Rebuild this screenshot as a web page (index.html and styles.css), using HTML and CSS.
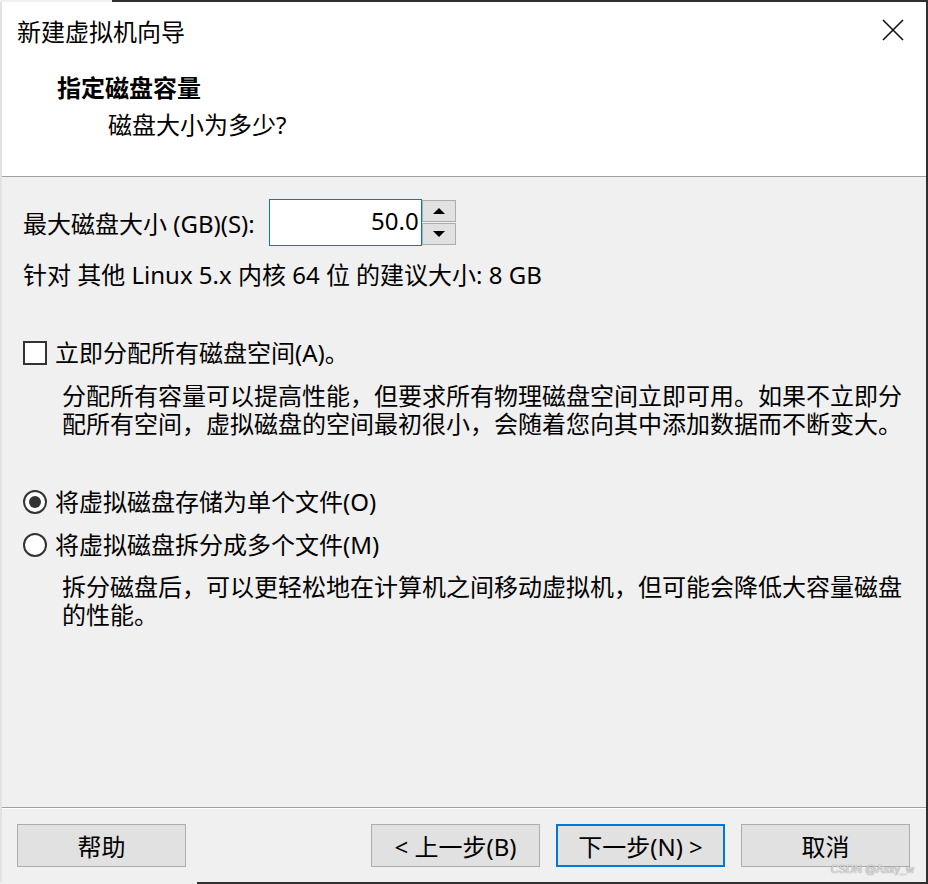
FILE: index.html
```html
<!DOCTYPE html>
<html>
  <head>
    <meta charset="UTF-8">
    <title>新建虚拟机向导</title>
    <link rel="stylesheet" href="styles.css">
  </head>
  <body>
    <div class="wizard">
      <div class="header">
        <div class="titlebar">
          <span class="title">新建虚拟机向导</span>
          <span class="close">
            <svg width="22" height="22" viewBox="0 0 22 22"><path d="M1 1 L21 21 M21 1 L1 21" stroke="#111" stroke-width="1.6" fill="none"/></svg>
          </span>
        </div>
        <div class="heading">指定磁盘容量</div>
        <div class="subheading">磁盘大小为多少?</div>
      </div>

      <div class="content">
        <div class="size-row">
          <label>最大磁盘大小 (GB)(S):</label>
          <div class="spin">
            <div class="spin-value">50.0</div>
            <div class="spin-buttons">
              <div class="spin-btn"><span class="arrow up"></span></div>
              <div class="spin-btn"><span class="arrow down"></span></div>
            </div>
          </div>
        </div>
        <div class="hint">针对 其他 Linux 5.x 内核 64 位 的建议大小: 8 GB</div>

        <div class="option first">
          <span class="checkbox"></span>
          <span>立即分配所有磁盘空间(A)。</span>
        </div>
        <div class="desc">分配所有容量可以提高性能，但要求所有物理磁盘空间立即可用。如果不立即分配所有空间，虚拟磁盘的空间最初很小，会随着您向其中添加数据而不断变大。</div>

        <div class="option radio-first">
          <span class="radio checked"></span>
          <span>将虚拟磁盘存储为单个文件(O)</span>
        </div>
        <div class="option radio-second">
          <span class="radio"></span>
          <span>将虚拟磁盘拆分成多个文件(M)</span>
        </div>
        <div class="desc desc2">拆分磁盘后，可以更轻松地在计算机之间移动虚拟机，但可能会降低大容量磁盘的性能。</div>
      </div>

      <div class="footer">
        <button class="btn">帮助</button>
        <div class="spacer"></div>
        <button class="btn">&lt; 上一步(B)</button>
        <button class="btn default">下一步(N) &gt;</button>
        <button class="btn">取消</button>
        <span class="watermark">CSDN @Asxy_w</span>
      </div>
    </div>
  </body>
</html>
```

FILE: styles.css
```css
html, body {
  margin: 0;
  padding: 0;
}

body {
  width: 928px;
  height: 884px;
  overflow: hidden;
  background:
    linear-gradient(#f0f0f0, #f0f0f0) 0 0 / 112px 2px no-repeat,
    linear-gradient(#f0f0f0, #f0f0f0) 0 100% / 197px 2px no-repeat,
    #2f2f2f;
  font-family: "Noto Sans", "Noto Sans CJK SC", sans-serif;
  font-size: 24px;
  color: #000;
}

.wizard {
  position: relative;
  margin-top: 2px;
  width: 926px;
  height: 880px;
  background-color: #f0f0f0;
  border-left: 2px solid #e2e2e2;
  box-sizing: border-box;
  display: flex;
  flex-direction: column;
}

.header {
  height: 175px;
  background-color: #fff;
  border-bottom: 1px solid #a0a0a0;
  box-sizing: border-box;
}

.titlebar {
  height: 56px;
  display: flex;
  align-items: center;
  justify-content: space-between;
  padding: 0 22px 0 15px;
}

.close {
  display: flex;
  width: 22px;
  height: 22px;
}

.heading {
  margin: 15px 0 0 55px;
  line-height: 30px;
  font-weight: bold;
}

.subheading {
  margin: 7px 0 0 106px;
  line-height: 30px;
}

.content {
  flex: 1;
  padding: 22px 0 0 21px;
}

.size-row {
  display: flex;
  align-items: center;
  height: 47px;
}

.size-row label {
  margin-right: 14px;
}

.spin {
  display: flex;
  height: 47px;
}

.spin-value {
  width: 153px;
  border: 1px solid #0078d7;
  background-color: #fff;
  box-sizing: border-box;
  text-align: right;
  padding-right: 2px;
  line-height: 42px;
}

.spin-buttons {
  display: flex;
  flex-direction: column;
  gap: 1px;
  padding: 1px 0;
  background-color: #f0f0f0;
}

.spin-btn {
  width: 34px;
  flex: 1;
  border: 1px solid #adadad;
  background-color: #e1e1e1;
  box-sizing: border-box;
  display: flex;
  align-items: center;
  justify-content: center;
}

.arrow {
  width: 0;
  height: 0;
  border-left: 6px solid transparent;
  border-right: 6px solid transparent;
}

.arrow.up {
  border-bottom: 6px solid #000;
}

.arrow.down {
  border-top: 6px solid #000;
}

.hint {
  margin-top: 14px;
  line-height: 30px;
}

.option {
  display: flex;
  align-items: center;
  gap: 8px;
  line-height: 30px;
}

.option.first {
  margin-top: 48px;
}

.option.radio-first {
  margin-top: 49px;
}

.option.radio-second {
  margin-top: 13px;
}

.checkbox {
  width: 24px;
  height: 24px;
  border: 2px solid #333;
  background-color: #fff;
  box-sizing: border-box;
}

.radio {
  width: 24px;
  height: 24px;
  border: 2px solid #333;
  border-radius: 50%;
  background-color: #fff;
  box-sizing: border-box;
  display: flex;
  align-items: center;
  justify-content: center;
}

.radio.checked::after {
  content: "";
  width: 12px;
  height: 12px;
  border-radius: 50%;
  background-color: #333;
}

.desc {
  margin: 14px 20px 0 39px;
  line-height: 28px;
}

.desc2 {
  margin-top: 13px;
}

.footer {
  position: relative;
  height: 75px;
  border-top: 1px solid #a0a0a0;
  box-shadow: inset 0 1px 0 #fff;
  box-sizing: border-box;
  display: flex;
  align-items: flex-start;
  gap: 16px;
  padding: 16px 16px 0 15px;
}

.spacer {
  flex: 1;
}

.btn {
  width: 169px;
  height: 43px;
  border: 1px solid #adadad;
  background-color: #e1e1e1;
  font-family: inherit;
  font-size: 24px;
  color: #000;
  padding: 0;
}

.btn.default {
  border: 2px solid #0078d7;
}

.watermark {
  position: absolute;
  right: 12px;
  bottom: 7px;
  font-family: "Liberation Sans", sans-serif;
  font-size: 11px;
  color: #e4e4e4;
  text-shadow: 0 0 1px #555;
}
```
